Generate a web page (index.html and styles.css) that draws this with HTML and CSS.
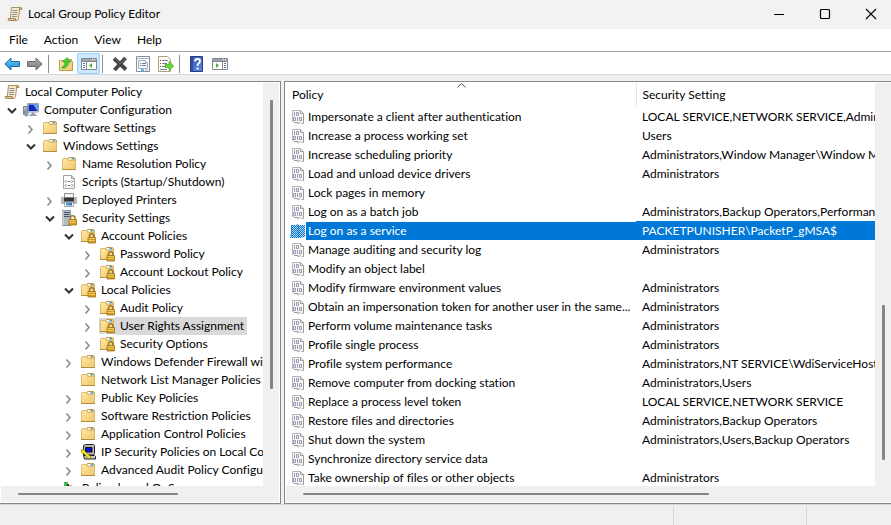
FILE: index.html
```html
<!DOCTYPE html>
<html lang="en">
<head>
<meta charset="utf-8">
<title>Local Group Policy Editor</title>
<link rel="stylesheet" href="styles.css">
</head>
<body>
<svg class="sprite" aria-hidden="true">
  <defs>
    <linearGradient id="gold" x1="0" y1="0" x2="1" y2="1"><stop offset="0" stop-color="#ffe9a6"/><stop offset="1" stop-color="#f0c66a"/></linearGradient>
    <linearGradient id="blue" x1="0" y1="0" x2="0" y2="1"><stop offset="0" stop-color="#6fd0fa"/><stop offset="1" stop-color="#1583cf"/></linearGradient>
    <linearGradient id="grey" x1="0" y1="0" x2="0" y2="1"><stop offset="0" stop-color="#b5b5b5"/><stop offset="1" stop-color="#747474"/></linearGradient>
    <linearGradient id="help" x1="0" y1="0" x2="1" y2="1"><stop offset="0" stop-color="#3a55b5"/><stop offset="1" stop-color="#5b8be0"/></linearGradient>
    <pattern id="dots" width="2" height="2" patternUnits="userSpaceOnUse"><path d="M0 0h1v1H0zM1 1h1v1H1z" fill="#0078d7" shape-rendering="crispEdges"/></pattern>
  </defs>
  <symbol id="scroll" viewBox="0 0 16 16">
    <path d="M4.500 1.500h9q1.500 .2 1.200 2h-2L11.500 12.500q-.3 2-2 2h-7q-1.800-.2-1.200-2h2z" fill="#f8e9c3" stroke="#aa9568"/>
    <path d="M1.300 12.500h7q-.2 2 1.200 2h-7q-1.400 0-1.200-2z" fill="#e6cf98" stroke="#9b865a"/>
    <path d="M12.700 3.500q-.3-1.800 1-2 1.300.3 1 2z" fill="#d9c08a" stroke="#9b865a"/>
    <path d="M5.500 4.500h5M5.500 6.500h5M5 8.500h5M5 10.500h5" stroke="#8a8ea0"/>
  </symbol>
  <symbol id="open" viewBox="0 0 16 16"><path d="M4 6.500l4 4 4-4" fill="none" stroke="#303030" stroke-width="2"/></symbol>
  <symbol id="closed" viewBox="0 0 16 16"><path d="M5.500 5.500L9 9.500l-3.500 4" fill="none" stroke="#8c8c8c" stroke-width="1.600"/></symbol>
  <symbol id="folder" viewBox="0 0 16 16">
    <path d="M6.500 4V2.500l1-1h6l1 1V5z" fill="#f1cd76" stroke="#c09a4a"/>
    <path d="M8 2h5v1.500H8z" fill="#fff"/><path d="M10.500 2H13v1.500h-2.500z" fill="#3da1e0"/>
    <path d="M1.500 13.500V3.500l.5-1h4.500l1 2h7v9z" fill="url(#gold)" stroke="#dcb96c"/>
    <path d="M1 13.500h14" stroke="#b58b3c"/>
  </symbol>
  <symbol id="lock" viewBox="0 0 16 16">
    <path d="M9.500 10V7.500q0-1.800 2.200-1.800t2.200 1.800V10" fill="none" stroke="#9a7528" stroke-width="1.500"/>
    <path d="M8 9.500h7.500v5.500H8z" fill="#d39a20" stroke="#a0741c" stroke-width=".8"/>
    <path d="M8.500 10.500h6.500M8.500 12.500h6.500" stroke="#f4d063" stroke-width=".9"/>
  </symbol>
  <symbol id="folderlock" viewBox="0 0 16 16"><use href="#folder"/><use href="#lock"/></symbol>
  <symbol id="computer" viewBox="0 0 16 16">
    <path d="M4.500 1.500h11v8.500h-11z" fill="#d8dde5" stroke="#99a2ae"/>
    <path d="M5.500 2.500h9v6.500h-9z" fill="#1027ba"/><path d="M10 2.500h4.500V9z" fill="#6ea2f4"/>
    <path d="M8.500 10.500h3v2h2v1.500h-7v-1.500h2z" fill="#9299a3"/>
    <path d="M.5 4.500h3.500v8h-3.500z" fill="#bcc1c7" stroke="#7c838b"/><path d="M1 9h1v2H1z" fill="#35a84a"/>
    <path d="M2 8q3-1 3.500 2.500L4.500 14H2z" fill="#92a5bb" stroke="#6f8195" stroke-width=".6"/>
  </symbol>
  <symbol id="script" viewBox="0 0 16 16">
    <path d="M2.500 1.500h8l3 3v10h-11z" fill="#fff" stroke="#a2a2a2"/><path d="M10.500 1.500v3h3" fill="none" stroke="#a2a2a2"/>
    <path d="M5.500 6L4 7.500 5.500 9M10.500 6L12 7.500 10.500 9M5.500 10L4 11.500 5.500 13M10.500 10l1.500 1.500-1.500 1.500M6.500 7.500h3M6.500 11.500h3" fill="none" stroke="#777" stroke-width=".9"/>
  </symbol>
  <symbol id="printer" viewBox="0 0 16 16">
    <path d="M3.500 1.500h9v4h-9z" fill="#f7f7f7" stroke="#8c8c8c"/>
    <path d="M0 5h16v6.500H0z" fill="#7b7f84"/><path d="M0 5h3v6.500H0zM13 5h3v6.500h-3z" fill="#b4b8bc"/><path d="M3 6h10v3H3z" fill="#35383b"/>
    <path d="M3.500 10.500h9v4h-9z" fill="#fff" stroke="#9aa"/><path d="M5 11h4v2.500H5z" fill="#3c9bd6"/><path d="M9 11h2v2.500H9z" fill="#4d6a9a"/>
  </symbol>
  <symbol id="server" viewBox="0 0 16 16">
    <path d="M1.500 .5h8v15h-8z" fill="#b2bcc5" stroke="#8a96a1"/><path d="M2.500 2.500h6M2.500 4.500h6M2.500 6.500h6" stroke="#47545f"/><path d="M2 1v14" stroke="#e3e8ec"/>
    <use href="#lock"/>
  </symbol>
  <symbol id="ipsec" viewBox="0 0 16 16">
    <path d="M3.500 1.500l2-1h8l1 1v8l-1 1.500h-10z" fill="#b9b9b9" stroke="#222"/><path d="M5.500 3.500h6.500V8H5.500z" fill="#0808d8" stroke="#111"/>
    <path d="M3.500 11.500h11l1 1v2.500h-11z" fill="#c6c6c6" stroke="#222"/>
    <path d="M1 6q3-1.500 4 1.500l5.500 5-.5 2-2-.3-4-4.700Q1 9.500 1 6z" fill="#f7ee22" stroke="#746c00" stroke-width=".6"/>
  </symbol>
  <symbol id="qos" viewBox="0 0 16 16"><path d="M3 2h4v13H3z" fill="#49b35a"/><path d="M6 4h2v11H6z" fill="#263a2d"/><path d="M8 5h3v10H8z" fill="#ef9b78"/></symbol>
  <symbol id="policy" viewBox="0 0 16 16">
    <path d="M2.500 1.500h8l3 3v10h-2l-1-1-2 1-2-1h-2l-1-1h-1z" fill="#f8f8f8" stroke="#b4b4b4"/>
    <path d="M10.500 1.500v3h3M13.500 5v9.500M4 13.500h3l2 1" fill="none" stroke="#9c9c9c"/>
    <path d="M4.500 3v4M6.500 3.500h2v3h-2zM3.500 8.500h2v3h-2zM7.500 8v4M9.500 8.500h2v3h-2z" fill="none" stroke="#9898b4"/>
  </symbol>
  <symbol id="policyselected" viewBox="0 0 16 16"><path d="M1 2h5l1-1 2 1h6v12h-3l-1 1H0l1-5z" fill="#b9d5ec"/><path d="M1 2h5l1-1 2 1h6v12h-3l-1 1H0l1-5z" fill="url(#dots)"/><path d="M1.500 2v12M8.500 3v11" stroke="#0078d7" stroke-opacity=".6"/></symbol>
  <symbol id="back" viewBox="0 0 16 16"><path d="M.8 8L7 2v3.500h8.500v5H7V14z" fill="url(#blue)" stroke="#1c6da8"/></symbol>
  <symbol id="forward" viewBox="0 0 16 16"><path d="M15.200 8L9 2v3.500H.5v5H9V14z" fill="url(#grey)" stroke="#6c6c6c"/></symbol>
  <symbol id="up" viewBox="0 0 16 16">
    <path d="M1.500 14.500V4.500h5l1-1h6v2h1v9z" fill="url(#gold)" stroke="#c19b50"/>
    <path d="M3.500 11.500Q7 10 7 6H4.500L9 1.500 13 6h-2.500q0 5-5 6.500z" fill="#48ca32" stroke="#299c20" stroke-width=".6"/>
  </symbol>
  <symbol id="panel" viewBox="0 0 16 16">
    <path d="M.5 2.500h15v11H.5z" fill="#fff" stroke="#85898f"/><path d="M1 3h14v2H1z" fill="#9fa5ad"/><path d="M11 3.500h1M13 3.500h1" stroke="#fff"/><path d="M1 5.500h14M5.500 6v7.500" stroke="#85898f"/>
    <path d="M2 7.500h2M2 9.500h2M2 11.500h2" stroke="#4778a6"/><path d="M11 7v5L8 9.500z" fill="#35b72b"/>
  </symbol>
  <symbol id="panelright" viewBox="0 0 16 16">
    <path d="M.5 2.500h15v11H.5z" fill="#fff" stroke="#85898f"/><path d="M1 3h14v2H1z" fill="#9fa5ad"/><path d="M11 3.500h1M13 3.500h1" stroke="#fff"/><path d="M1 5.500h14M10.500 6v7.500" stroke="#85898f"/>
    <path d="M12 7.500h2M12 9.500h2M12 11.500h2" stroke="#4778a6"/><path d="M4 7v5l3-2.500z" fill="#35b72b"/>
  </symbol>
  <symbol id="delete" viewBox="0 0 16 16"><path d="M2 2.500l12 11M13.500 2L2.500 14" stroke="#444" stroke-width="3.800"/><path d="M2.500 2.500L8 7.500M13 3L8 8" stroke="#6d6d6d" stroke-width="1"/></symbol>
  <symbol id="props" viewBox="0 0 16 16">
    <path d="M1.500 .5h13v15h-13z" fill="#fff" stroke="#898f98"/><path d="M2 2.500h12" stroke="#aab3bf"/>
    <path d="M3.500 4.500h7v2h2v6h-9z" fill="#f2f6fb" stroke="#a7adb7"/><path d="M5 7.500h1M7 7.500h4M5 9.500h1M7 9.500h4" stroke="#71819a"/><path d="M6 14h3" stroke="#35a9e8" stroke-width="1.500"/><path d="M10 14h3" stroke="#a7adb7"/>
  </symbol>
  <symbol id="export" viewBox="0 0 16 16">
    <path d="M.5 .5h9l3 3v12H.5z" fill="#fffdf0" stroke="#aaa183"/><path d="M2 4.500h1M2 7.500h1M2 10.500h1" stroke="#555"/><path d="M4 4.500h6M4 7.500h5M4 10.500h3M2 13.500h7" stroke="#777cad"/>
    <path d="M7 8.500h4V5.500L15.700 10 11 14.500v-3H7z" fill="#69d636" stroke="#38a120" stroke-width=".7"/>
  </symbol>
  <symbol id="question" viewBox="0 0 16 16"><path d="M1.500 .5h12v15h-12z" fill="url(#help)" stroke="#233c86"/><path d="M3 1v14" stroke="#1f3684"/><path d="M6 5.500q0-2.500 2.500-2.500T11 5.200q0 1.500-1.500 2.300-1 .6-1 2.500" fill="none" stroke="#fff" stroke-width="1.800"/><path d="M7.500 11.500h2v2h-2z" fill="#fff"/></symbol>
</svg>

<header class="titlebar">
  <svg class="icon"><use href="#scroll"/></svg>
  <h1>Local Group Policy Editor</h1>
  <div class="window-buttons">
    <button aria-label="Minimize"><svg viewBox="0 0 12 12"><path d="M1 6.500h10" stroke="#000"/></svg></button>
    <button aria-label="Maximize"><svg viewBox="0 0 12 12"><rect x="1.500" y="1.500" width="9" height="9" rx="1" fill="none" stroke="#000" stroke-width="1.200"/></svg></button>
    <button aria-label="Close"><svg viewBox="0 0 12 12"><path d="M1 1l10 10M11 1L1 11" stroke="#000" stroke-width="1.100"/></svg></button>
  </div>
</header>
<nav class="menubar"><button>File</button><button>Action</button><button>View</button><button>Help</button></nav>
<div class="toolbar">
  <button aria-label="Back"><svg class="icon"><use href="#back"/></svg></button>
  <button aria-label="Forward"><svg class="icon"><use href="#forward"/></svg></button>
  <span class="separator"></span>
  <button aria-label="Up one level"><svg class="icon"><use href="#up"/></svg></button>
  <button class="active" aria-label="Show or hide console tree"><svg class="icon"><use href="#panel"/></svg></button>
  <span class="separator"></span>
  <button aria-label="Delete"><svg class="icon"><use href="#delete"/></svg></button>
  <button aria-label="Properties"><svg class="icon"><use href="#props"/></svg></button>
  <button aria-label="Export list"><svg class="icon"><use href="#export"/></svg></button>
  <span class="separator"></span>
  <button aria-label="Help topics"><svg class="icon"><use href="#question"/></svg></button>
  <button aria-label="Show or hide action pane"><svg class="icon"><use href="#panelright"/></svg></button>
</div>

<main class="panes">
  <section class="pane tree-pane">
    <div class="view">
      <div class="node"><svg class="icon"><use href="#scroll"/></svg><span>Local Computer Policy</span></div>
      <ul class="tree">
        <li><div class="node"><svg class="twist"><use href="#open"/></svg><svg class="icon"><use href="#computer"/></svg><span>Computer Configuration</span></div>
          <ul>
            <li><div class="node"><svg class="twist"><use href="#closed"/></svg><svg class="icon"><use href="#folder"/></svg><span>Software Settings</span></div></li>
            <li><div class="node"><svg class="twist"><use href="#open"/></svg><svg class="icon"><use href="#folder"/></svg><span>Windows Settings</span></div>
              <ul>
                <li><div class="node"><svg class="twist"><use href="#closed"/></svg><svg class="icon"><use href="#folder"/></svg><span>Name Resolution Policy</span></div></li>
                <li><div class="node"><svg class="twist"></svg><svg class="icon"><use href="#script"/></svg><span>Scripts (Startup/Shutdown)</span></div></li>
                <li><div class="node"><svg class="twist"><use href="#closed"/></svg><svg class="icon"><use href="#printer"/></svg><span>Deployed Printers</span></div></li>
                <li><div class="node"><svg class="twist"><use href="#open"/></svg><svg class="icon"><use href="#server"/></svg><span>Security Settings</span></div>
                  <ul>
                    <li><div class="node"><svg class="twist"><use href="#open"/></svg><svg class="icon"><use href="#folderlock"/></svg><span>Account Policies</span></div>
                      <ul>
                        <li><div class="node"><svg class="twist"><use href="#closed"/></svg><svg class="icon"><use href="#folderlock"/></svg><span>Password Policy</span></div></li>
                        <li><div class="node"><svg class="twist"><use href="#closed"/></svg><svg class="icon"><use href="#folderlock"/></svg><span>Account Lockout Policy</span></div></li>
                      </ul>
                    </li>
                    <li><div class="node"><svg class="twist"><use href="#open"/></svg><svg class="icon"><use href="#folderlock"/></svg><span>Local Policies</span></div>
                      <ul>
                        <li><div class="node"><svg class="twist"><use href="#closed"/></svg><svg class="icon"><use href="#folderlock"/></svg><span>Audit Policy</span></div></li>
                        <li><div class="node selected"><svg class="twist"><use href="#closed"/></svg><svg class="icon"><use href="#folderlock"/></svg><span>User Rights Assignment</span></div></li>
                        <li><div class="node"><svg class="twist"><use href="#closed"/></svg><svg class="icon"><use href="#folderlock"/></svg><span>Security Options</span></div></li>
                      </ul>
                    </li>
                    <li><div class="node"><svg class="twist"><use href="#closed"/></svg><svg class="icon"><use href="#folder"/></svg><span>Windows Defender Firewall with Advanced Security</span></div></li>
                    <li><div class="node"><svg class="twist"></svg><svg class="icon"><use href="#folder"/></svg><span>Network List Manager Policies</span></div></li>
                    <li><div class="node"><svg class="twist"><use href="#closed"/></svg><svg class="icon"><use href="#folder"/></svg><span>Public Key Policies</span></div></li>
                    <li><div class="node"><svg class="twist"><use href="#closed"/></svg><svg class="icon"><use href="#folder"/></svg><span>Software Restriction Policies</span></div></li>
                    <li><div class="node"><svg class="twist"><use href="#closed"/></svg><svg class="icon"><use href="#folder"/></svg><span>Application Control Policies</span></div></li>
                    <li><div class="node"><svg class="twist"><use href="#closed"/></svg><svg class="icon"><use href="#ipsec"/></svg><span>IP Security Policies on Local Computer</span></div></li>
                    <li><div class="node"><svg class="twist"><use href="#closed"/></svg><svg class="icon"><use href="#folder"/></svg><span>Advanced Audit Policy Configuration</span></div></li>
                  </ul>
                </li>
                <li><div class="node"><svg class="twist"></svg><svg class="icon"><use href="#qos"/></svg><span>Policy-based QoS</span></div></li>
              </ul>
            </li>
          </ul>
        </li>
      </ul>
    </div>
    <div class="track vertical"><div class="thumb"></div></div>
    <div class="track horizontal"><div class="thumb"></div></div>
  </section>

  <section class="pane list-pane">
    <div class="view">
      <table>
        <thead><tr><th class="policy-column" scope="col">Policy<svg class="sort" viewBox="0 0 9 5"><path d="M.5 4.500l4-4 4 4" fill="none" stroke="#555"/></svg></th><th scope="col">Security Setting</th></tr></thead>
        <tbody>
          <tr><td><div class="policy"><svg class="icon"><use href="#policy"/></svg><span>Impersonate a client after authentication</span></div></td><td>LOCAL SERVICE,NETWORK SERVICE,Administrators</td></tr>
          <tr><td><div class="policy"><svg class="icon"><use href="#policy"/></svg><span>Increase a process working set</span></div></td><td>Users</td></tr>
          <tr><td><div class="policy"><svg class="icon"><use href="#policy"/></svg><span>Increase scheduling priority</span></div></td><td>Administrators,Window Manager\Window Manager Group</td></tr>
          <tr><td><div class="policy"><svg class="icon"><use href="#policy"/></svg><span>Load and unload device drivers</span></div></td><td>Administrators</td></tr>
          <tr><td><div class="policy"><svg class="icon"><use href="#policy"/></svg><span>Lock pages in memory</span></div></td><td></td></tr>
          <tr><td><div class="policy"><svg class="icon"><use href="#policy"/></svg><span>Log on as a batch job</span></div></td><td>Administrators,Backup Operators,Performance Log Users</td></tr>
          <tr class="selected"><td><div class="policy"><svg class="icon"><use href="#policyselected"/></svg><span>Log on as a service</span></div></td><td>PACKETPUNISHER\PacketP_gMSA$</td></tr>
          <tr><td><div class="policy"><svg class="icon"><use href="#policy"/></svg><span>Manage auditing and security log</span></div></td><td>Administrators</td></tr>
          <tr><td><div class="policy"><svg class="icon"><use href="#policy"/></svg><span>Modify an object label</span></div></td><td></td></tr>
          <tr><td><div class="policy"><svg class="icon"><use href="#policy"/></svg><span>Modify firmware environment values</span></div></td><td>Administrators</td></tr>
          <tr><td><div class="policy"><svg class="icon"><use href="#policy"/></svg><span>Obtain an impersonation token for another user in the same...</span></div></td><td>Administrators</td></tr>
          <tr><td><div class="policy"><svg class="icon"><use href="#policy"/></svg><span>Perform volume maintenance tasks</span></div></td><td>Administrators</td></tr>
          <tr><td><div class="policy"><svg class="icon"><use href="#policy"/></svg><span>Profile single process</span></div></td><td>Administrators</td></tr>
          <tr><td><div class="policy"><svg class="icon"><use href="#policy"/></svg><span>Profile system performance</span></div></td><td>Administrators,NT SERVICE\WdiServiceHost</td></tr>
          <tr><td><div class="policy"><svg class="icon"><use href="#policy"/></svg><span>Remove computer from docking station</span></div></td><td>Administrators,Users</td></tr>
          <tr><td><div class="policy"><svg class="icon"><use href="#policy"/></svg><span>Replace a process level token</span></div></td><td>LOCAL SERVICE,NETWORK SERVICE</td></tr>
          <tr><td><div class="policy"><svg class="icon"><use href="#policy"/></svg><span>Restore files and directories</span></div></td><td>Administrators,Backup Operators</td></tr>
          <tr><td><div class="policy"><svg class="icon"><use href="#policy"/></svg><span>Shut down the system</span></div></td><td>Administrators,Users,Backup Operators</td></tr>
          <tr><td><div class="policy"><svg class="icon"><use href="#policy"/></svg><span>Synchronize directory service data</span></div></td><td></td></tr>
          <tr><td><div class="policy"><svg class="icon"><use href="#policy"/></svg><span>Take ownership of files or other objects</span></div></td><td>Administrators</td></tr>
        </tbody>
      </table>
    </div>
    <div class="track vertical"><div class="thumb"></div></div>
    <div class="track horizontal"><div class="thumb"></div></div>
  </section>
</main>
<footer class="statusbar"><span></span><span></span><span></span></footer>
</body>
</html>
```
FILE: styles.css
```css
* { box-sizing: border-box; }
body {
  margin: 0;
  height: 100vh;
  display: flex;
  flex-direction: column;
  overflow: hidden;
  background: #f0f0f0;
  color: #000;
  font: 12px/18px "Segoe UI", Lato, "Open Sans", sans-serif;
  font-variant-ligatures: none;
}
button { padding: 0; border: 0; background: none; color: inherit; font: inherit; }
ul { margin: 0; padding: 0; list-style: none; }
svg { display: block; flex: none; }
.sprite { position: absolute; width: 0; height: 0; }
.icon, .twist { width: 16px; height: 16px; }

.titlebar { display: flex; align-items: center; height: 29px; flex: none; padding: 0 0 2px 7px; background: #f2f2f2; }
.titlebar h1 { margin: 0 0 0 5px; font-size: 12px; font-weight: 400; }
.window-buttons { display: flex; margin: 0 -3px 0 auto; }
.window-buttons button { display: grid; place-items: center; width: 46px; height: 27px; }
.window-buttons svg { width: 12px; height: 12px; }

.menubar { display: flex; gap: 16px; height: 23px; flex: none; padding: 0 9px; background: #fff; border-bottom: 1px solid #a8a8ac; }
.toolbar { display: flex; align-items: center; height: 23px; flex: none; padding-top: 1px; background: #fff; border-bottom: 1px solid #d8d8d8; }
.toolbar button { display: grid; place-items: center; width: 23px; height: 21px; }
.toolbar .active { border: 1px solid #99d1ff; border-radius: 2px; background: #cce8ff; }
.separator { width: 1px; height: 18px; margin: 0 5px 0 2px; background: #8d8d8d; }

.panes { display: grid; grid-template-columns: 281px minmax(0, 1fr); gap: 3px; flex: 1; min-height: 0; margin-top: 6px; }
.pane {
  display: grid;
  grid-template-columns: minmax(0, 1fr) 16px;
  grid-template-rows: minmax(0, 1fr) 16px;
  min-height: 0;
  padding: 1px;
  background: #fff;
  border: 1px solid #828790;
}
.tree-pane { border-left: 0; }
.list-pane { padding-right: 0; border-right: 0; }
.view { overflow: hidden; white-space: nowrap; }
.track { background: #f0f0f0; }
.thumb { background: #858585; border-radius: 1px; }
.vertical { grid-row: span 2; padding: 0 6px 0 7px; }
.horizontal { grid-row: 2; grid-column: 1; padding-top: 7px; }
.horizontal .thumb { height: 2px; }
.tree-pane .vertical .thumb { height: 69%; margin-top: 17px; }
.tree-pane .horizontal .thumb { width: 61%; margin-left: 17px; }
.list-pane .vertical .thumb { height: 37%; margin-top: 222px; }
.list-pane .horizontal .thumb { width: 69%; margin-left: 17px; }

.node { display: flex; align-items: center; height: 18px; padding-left: 3px; }
.node .twist { margin-right: 3px; }
.node span { padding: 0 3px 0 5px; }
.tree ul { padding-left: 19px; }
.node.selected span { background: #d9d9d9; }
.node.selected .icon { background: #d9d9d9; }

table { width: 100%; border-collapse: collapse; table-layout: fixed; }
th, td { height: 19px; padding: 0 0 0 6px; overflow: hidden; text-align: left; font-weight: 400; }
th { position: relative; height: 24px; }
.policy-column { width: 350px; border-right: 1px solid #e5e5e5; }
.sort { position: absolute; top: 0; left: 50%; width: 9px; height: 5px; margin-left: -4px; }
.policy { display: flex; align-items: center; height: 19px; margin-left: -2px; }
.policy span { flex: 1; padding-left: 2px; }
.selected .policy span, tr.selected td:last-child { background: #0078d7; color: #fff; }

.statusbar { display: grid; grid-template-columns: 1fr 133px 85px; height: 21px; flex: none; padding-top: 2px; border-top: 1px solid #d7d7d7; }
.statusbar span + span { border-left: 1px solid #d7d7d7; }
```
